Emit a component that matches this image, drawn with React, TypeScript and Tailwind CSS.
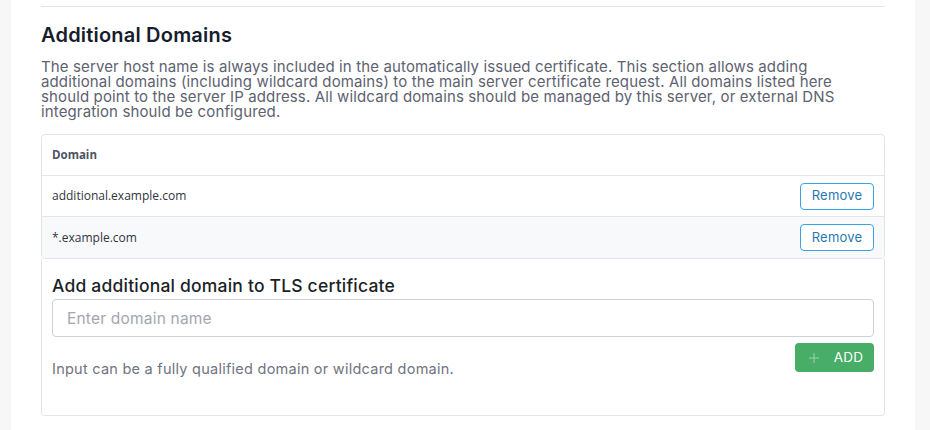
import { Plus } from "lucide-react";

const domains = ["additional.example.com", "*.example.com"];

export default function App() {
  return (
    <div className="flex h-[430px] w-[930px] overflow-hidden bg-[#f7f7f8] font-['Inter',sans-serif]">
      <div className="ml-[11px] w-[904px] bg-white px-[30px]">
        <div className="mt-[6px] border-t border-[#e3e4e8]" />

        <h2 className="mt-[16px] text-[20px] font-semibold leading-[24px] tracking-[0.2px] text-[#161d2c]">
          Additional Domains
        </h2>
        <p className="mt-[12px] max-w-[826px] text-[15px] leading-[15px] tracking-[0.13px] text-[#5d6270]">
          The server host name is always included in the automatically issued certificate. This section allows adding
          additional domains (including wildcard domains) to the main server certificate request. All domains listed here
          should point to the server IP address. All wildcard domains should be managed by this server, or external DNS
          integration should be configured.
        </p>

        <div className="mt-[15px] overflow-hidden rounded-[4px] border border-[#e4e5e9] font-['Open_Sans',sans-serif] text-[12px]">
          <div className="flex h-[41px] items-center border-b border-[#e4e5e9] px-[10px] text-[11.5px] font-bold text-[#4b5262]">
            Domain
          </div>
          {domains.map((d, i) => (
            <div
              key={d}
              className={
                "flex h-[41px] items-center justify-between px-[10px] text-[#30343d] " +
                (i === 0 ? "border-b border-[#e4e5e9] bg-white" : "bg-[#f8f9fb]")
              }
            >
              <span>{d}</span>
              <button className="h-[27px] w-[74px] rounded-[4px] border border-[#39a3e6] bg-white font-['Inter',sans-serif] text-[13px] tracking-[0.2px] text-[#2a77b1]">
                Remove
              </button>
            </div>
          ))}
        </div>

        <div className="h-[157px] rounded-b-[4px] border border-t-0 border-[#e4e5e9] px-[10px] pt-[16px]">
          <h3 className="text-[17.5px] font-medium leading-[22px] tracking-[0.2px] text-[#1b1f27]">
            Add additional domain to TLS certificate
          </h3>
          <input
            placeholder="Enter domain name"
            className="mt-[2px] block h-[38px] w-full rounded-[4px] border border-[#cfd0d7] px-[14px] text-[15.5px] tracking-[0.2px] text-[#333] outline-none placeholder:text-[#a3a6b0]"
          />
          <div className="mt-[6px] flex items-start justify-between">
            <span className="mt-[15px] text-[14.5px] tracking-[0.25px] text-[#70747f]">
              Input can be a fully qualified domain or wildcard domain.
            </span>
            <button className="flex h-[29px] w-[79px] items-center justify-center gap-[12px] rounded-[4px] bg-[#48ad66] text-[13.5px] tracking-[0.3px] text-white">
              <Plus size={16} strokeWidth={1.5} className="text-[#9ad3aa]" />
              ADD
            </button>
          </div>
        </div>
      </div>
    </div>
  );
}
